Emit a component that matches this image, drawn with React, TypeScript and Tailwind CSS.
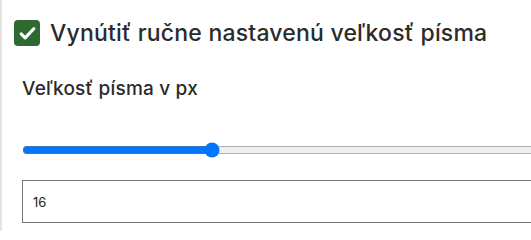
import React, { useState } from "react";

export default function App() {
  const [size, setSize] = useState(16);
  return (
    <div className="h-[231px] w-[531px] overflow-hidden bg-white">
      <div className="h-full border-l-2 border-[#e4e4e4] font-['Inter',sans-serif] text-[#2b2b2b]">
        <label className="flex items-center gap-[10px] pl-[12px] pt-[20px]">
          <span className="flex h-[26px] w-[26px] shrink-0 items-center justify-center rounded-[4px] bg-[#2e6a30]">
            <svg viewBox="0 0 24 24" className="h-[19px] w-[19px]" fill="none" stroke="white" strokeWidth="4" strokeLinecap="round" strokeLinejoin="round">
              <path d="M4 12.5l5 5L20 6" />
            </svg>
          </span>
          <span className="whitespace-nowrap text-[23px] font-medium leading-[26px] tracking-[0.2px]">
            Vynútiť ručne nastavenú veľkosť písma
          </span>
        </label>

        <div className="pl-[20px]">
          <div className="mt-[32px] whitespace-nowrap text-[19px] font-medium leading-[22px] tracking-[0.2px]">Veľkosť písma v px</div>
          <input
            type="range"
            min={10}
            max={30}
            value={size}
            onChange={(e) => setSize(Number(e.target.value))}
            className="mt-[42px] block w-[623px]"
          />
          <input
            type="text"
            value={String(size)}
            onChange={(e) => setSize(Number(e.target.value) || 0)}
            className="mt-[22px] block h-[43px] w-[700px] border border-[#767676] px-[10px] text-[13px] text-[#222]"
          />
        </div>
      </div>
    </div>
  );
}
